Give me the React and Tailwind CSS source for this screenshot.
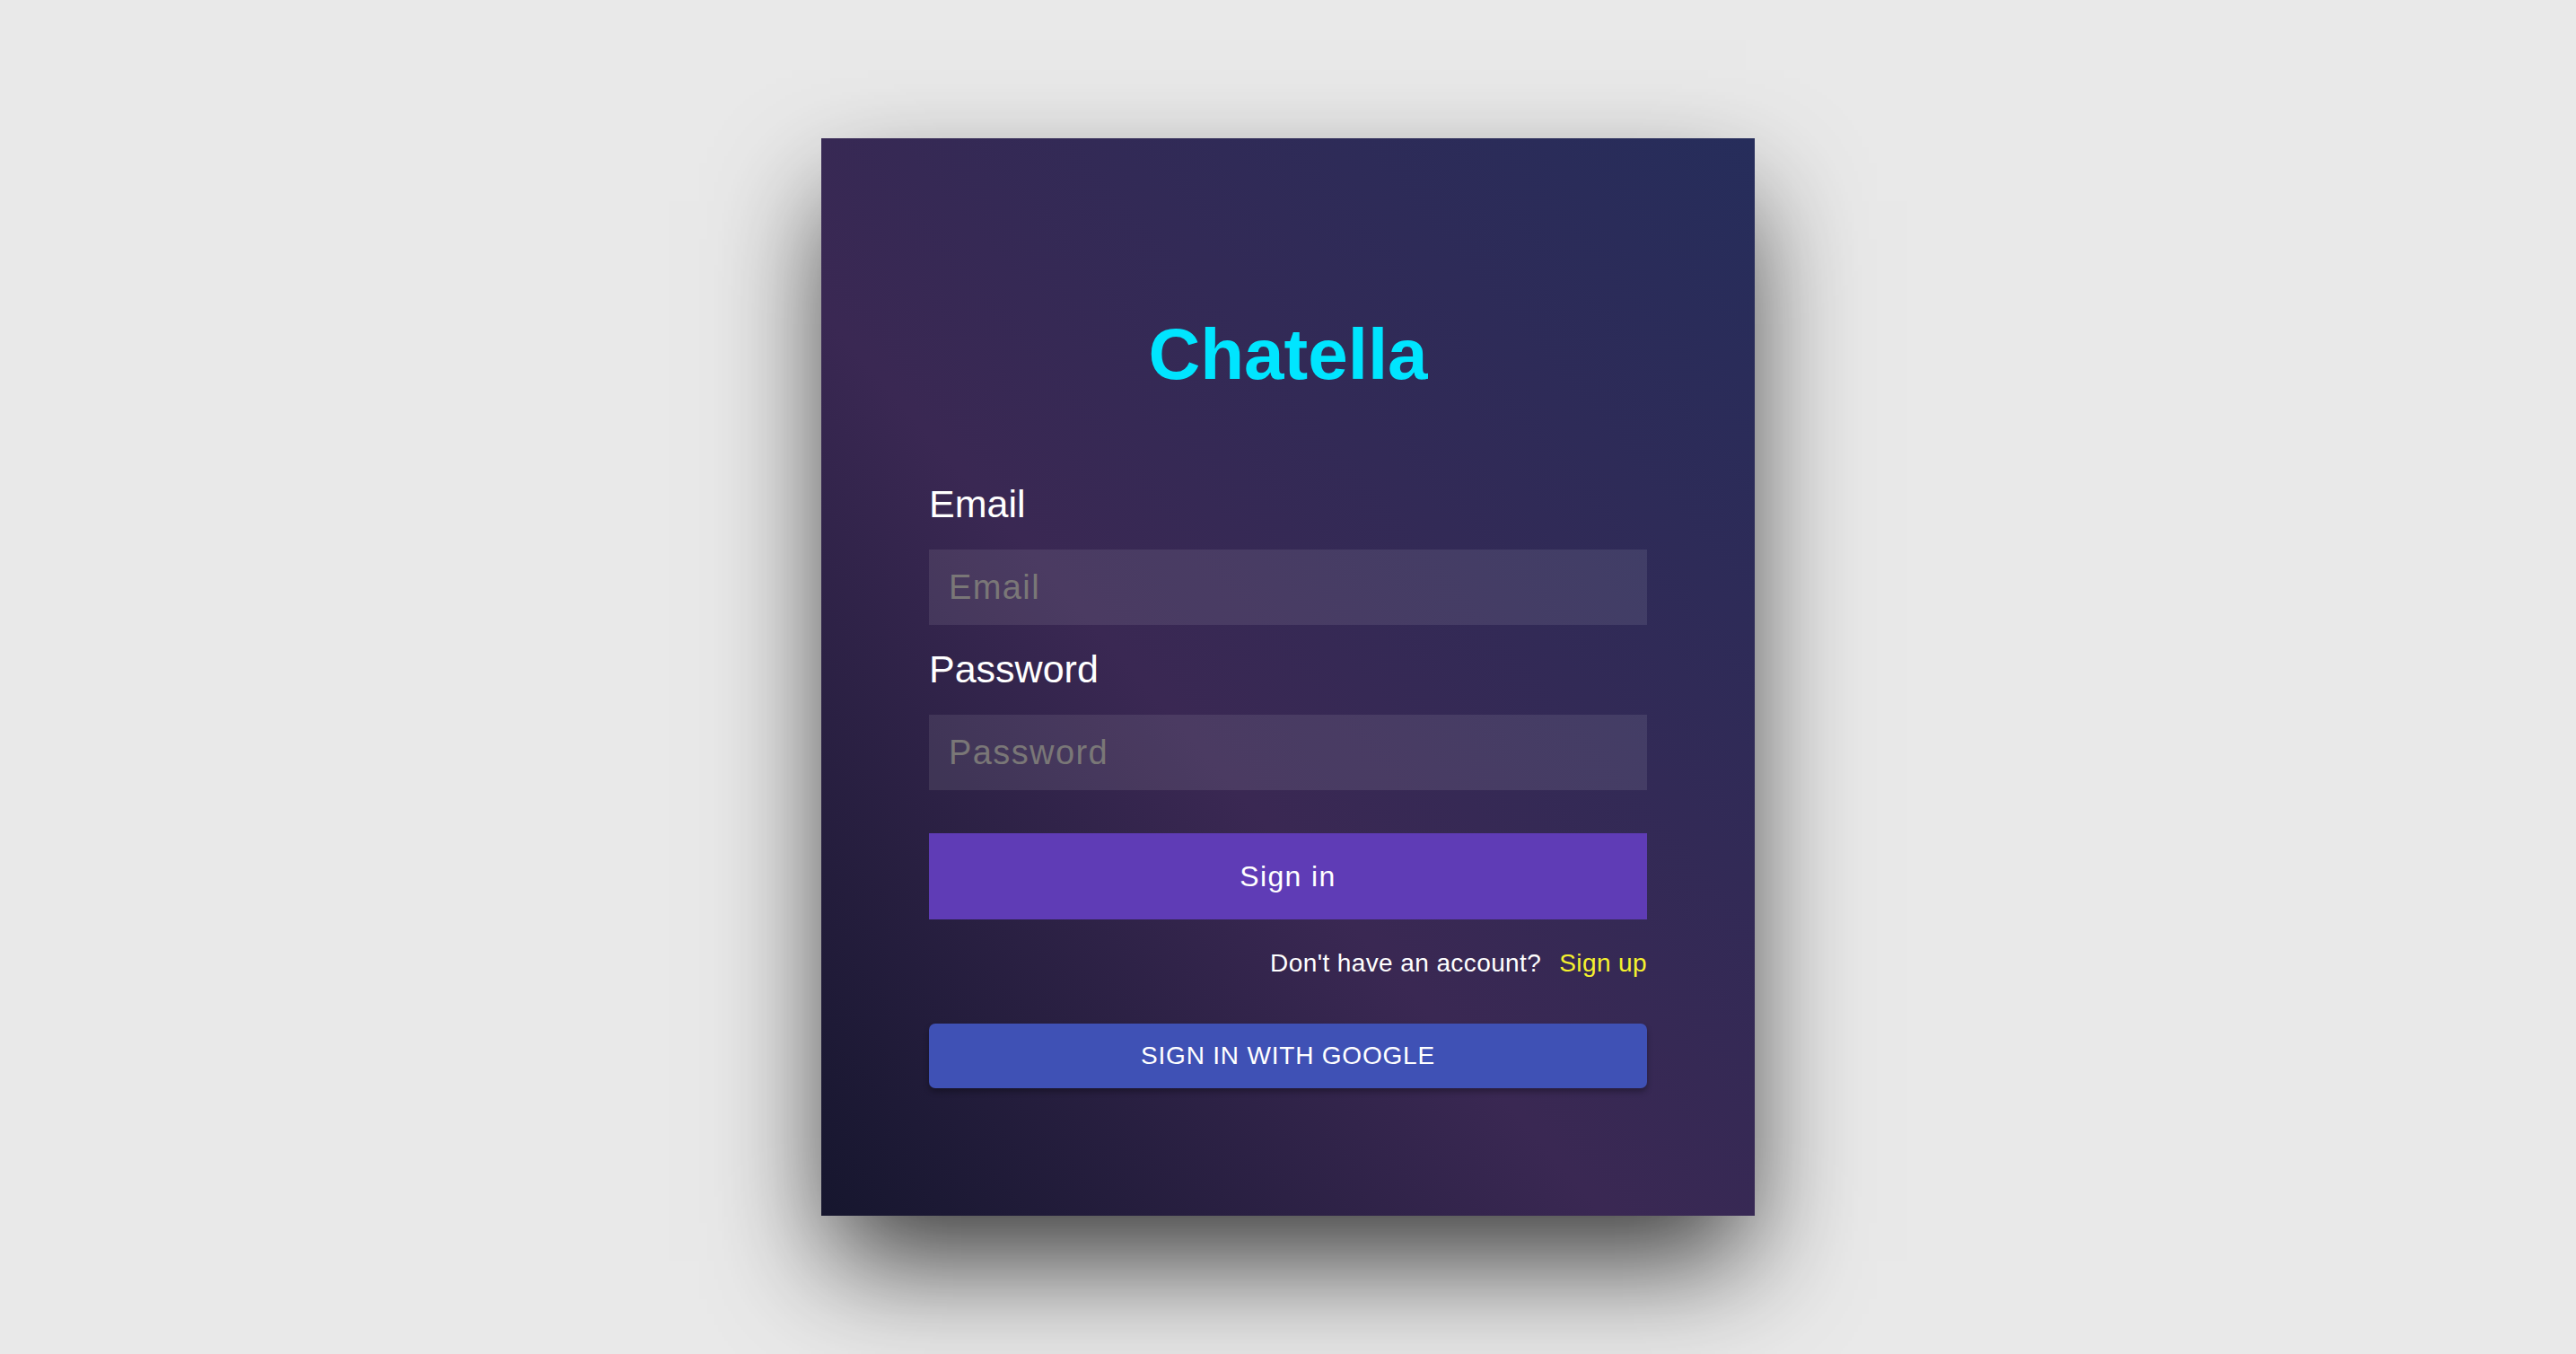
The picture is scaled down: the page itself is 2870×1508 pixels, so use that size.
import React from "react";

export default function App() {
  return (
    <div
      className="w-full h-screen bg-[#e9e9e9] flex items-center justify-center"
      style={{ fontFamily: '"Liberation Sans", Arial, sans-serif' }}
    >
      <div className="w-[1040px] h-[1200px] bg-[linear-gradient(to_top_right,#16162e_0%,#3a2853_42%,#262d5b_100%)] shadow-[0_60px_120px_-10px_rgba(0,0,0,0.75)] flex flex-col px-[120px] pt-[201px] pb-[142px]">
        <h1 className="text-[80px] leading-[80px] font-bold text-[#00e5ff] text-center m-0">
          Chatella
        </h1>
        <label className="mt-[105px] text-[43px] leading-[43px] text-white">Email</label>
        <input
          type="email"
          placeholder="Email"
          className="mt-[29px] h-[84px] w-full bg-[rgba(255,255,255,0.09)] px-[22px] text-[38px] tracking-[1.4px] text-white placeholder:text-[#7a7777] outline-none border-0"
        />
        <label className="mt-[28px] text-[43px] leading-[43px] text-white">Password</label>
        <input
          type="password"
          placeholder="Password"
          className="mt-[29px] h-[84px] w-full bg-[rgba(255,255,255,0.09)] px-[22px] text-[38px] tracking-[1.4px] text-white placeholder:text-[#7a7777] outline-none border-0"
        />
        <button className="mt-[48px] h-[96px] w-full bg-[#5f3cb6] text-white text-[32px] tracking-[1.4px]">
          Sign in
        </button>
        <div className="mt-[35px] h-[28px] text-[28px] leading-[28px] tracking-[0.4px] text-right text-white">
          Don't have an account?
          <span className="ml-[20px] text-[#f5f22e]">Sign up</span>
        </div>
        <button className="mt-[53px] h-[72px] w-full rounded-[7px] bg-[#3f51b5] text-white text-[28px] tracking-[0.8px] uppercase shadow-[0_4px_6px_rgba(0,0,0,0.3)]">
          Sign in with Google
        </button>
      </div>
    </div>
  );
}
